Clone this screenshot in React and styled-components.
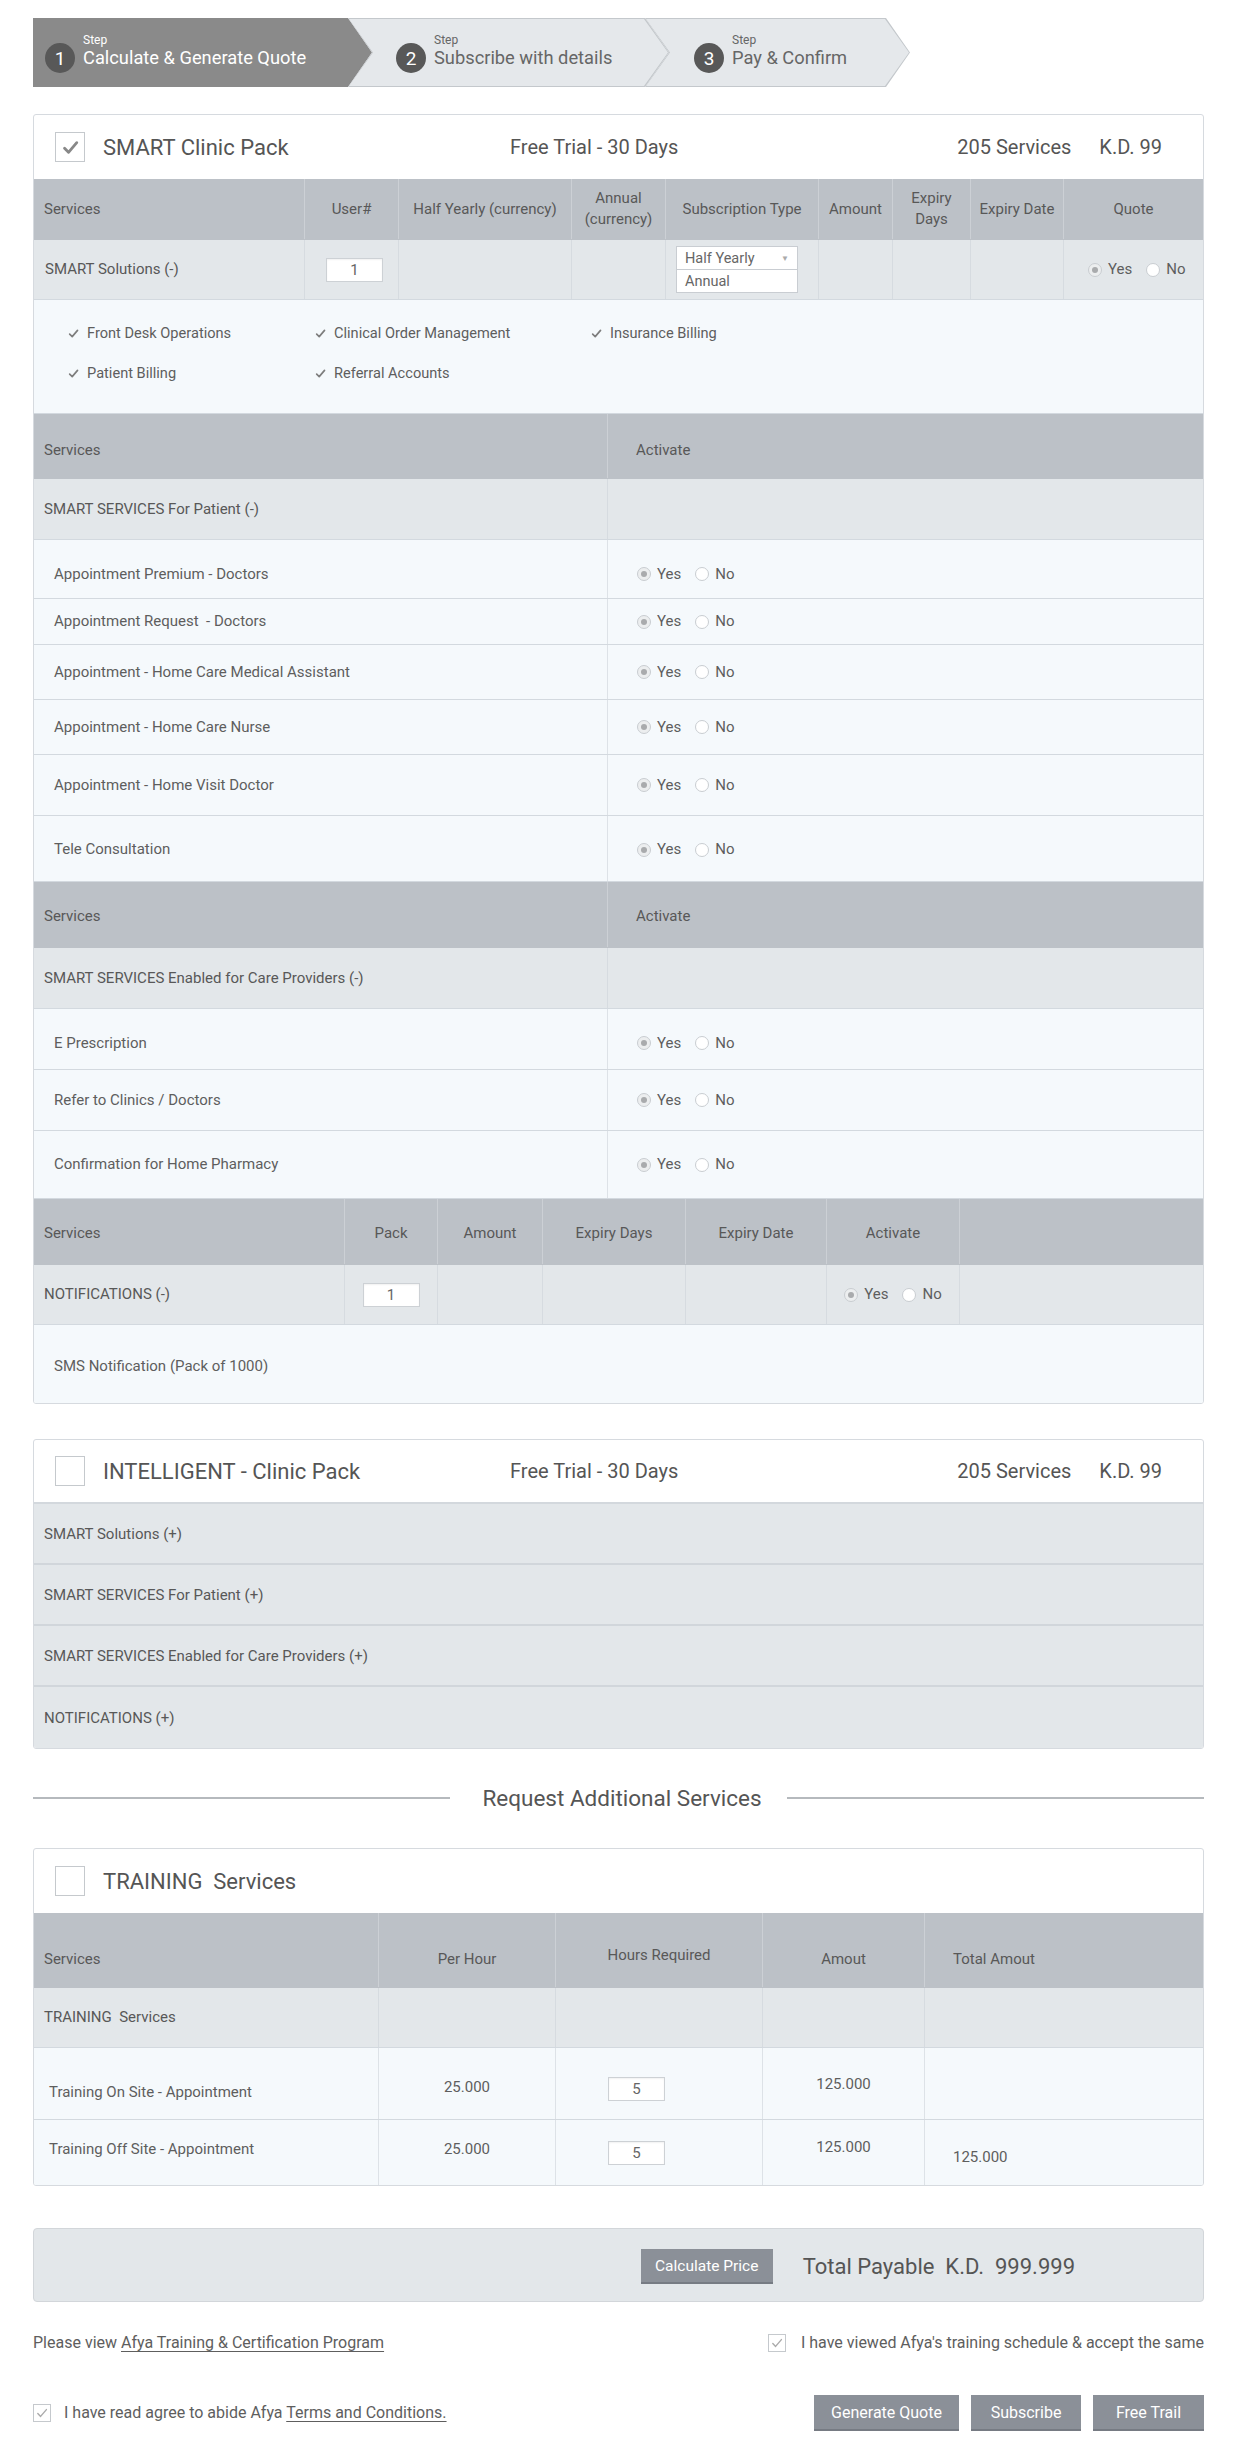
import React from 'react'
import styled, { createGlobalStyle } from 'styled-components'

const GlobalStyle = createGlobalStyle`
  * { box-sizing: border-box; }
  body {
    margin: 0;
    background: #fff;
    font-family: Roboto, "Liberation Sans", Arial, sans-serif;
    color: #5e5e5e;
  }
`

const Page = styled.div`
  width: 1171px;
  margin-left: 33px;
  padding: 18px 0 10px;
`

/* ---------- steps ---------- */

const firstArrow = 'polygon(0 0, calc(100% - 24px) 0, 100% 50%, calc(100% - 24px) 100%, 0 100%)'
const restArrow = 'polygon(0 0, calc(100% - 24px) 0, 100% 50%, calc(100% - 24px) 100%, 0 100%, 24px 50%)'

const StepBar = styled.div`
  display: flex;
  height: 69px;
`

const StepEdge = styled.div`
  flex: 0 0 ${p => p.$w}px;
  margin-left: ${p => (p.$first ? 0 : -24)}px;
  padding: 1px;
  background: ${p => (p.$active ? '#8a8a8a' : '#c4c8cc')};
  clip-path: ${p => (p.$first ? firstArrow : restArrow)};
`

const StepFace = styled.div`
  height: 100%;
  display: flex;
  align-items: flex-end;
  padding: 0 0 13px ${p => p.$pad}px;
  background: ${p => (p.$active ? '#8a8a8a' : '#e5e8eb')};
  clip-path: ${p => (p.$first ? firstArrow : restArrow)};
  color: ${p => (p.$active ? '#fff' : '#666')};
`

const StepNum = styled.div`
  width: 30px;
  height: 30px;
  border-radius: 50%;
  background: #585858;
  color: #fff;
  font-size: 19px;
  display: flex;
  align-items: center;
  justify-content: center;
  flex: none;
`

const StepText = styled.div`
  margin: 0 0 4px 8px;
  display: flex;
  flex-direction: column;
`

const StepLabel = styled.span`
  font-size: 12px;
  line-height: 14px;
`

const StepTitle = styled.span`
  font-size: 18.3px;
  line-height: 22px;
  white-space: nowrap;
`

/* ---------- cards ---------- */

const Card = styled.section`
  margin-top: ${p => p.$mt}px;
  border: 1px solid #d6dadf;
  border-radius: 3px;
  background: #fff;
  overflow: hidden;
`

const CardHead = styled.div`
  height: ${p => p.$h || 64}px;
  display: flex;
  align-items: center;
  padding: 0 41px 0 21px;
  border-bottom: ${p => (p.$line ? '2px solid #d3d8dd' : 'none')};
  color: #555;
`

const HeadLeft = styled.div`
  width: 455px;
  display: flex;
  align-items: center;
`

const BigCheck = styled.div`
  width: 30px;
  height: 30px;
  border: 1px solid #c5c9cd;
  background: #fff;
  display: flex;
  align-items: center;
  justify-content: center;
  flex: none;
`

const SmallCheck = styled(BigCheck)`
  width: 18px;
  height: 18px;
`

const PackTitle = styled.h2`
  margin: 0 0 0 18px;
  font-weight: 400;
  font-size: 22px;
  white-space: pre;
`

const HeadInfo = styled.span`
  font-size: 20px;
  margin-left: ${p => p.$ml || 0}px;
`

const Spacer = styled.div`
  flex: 1;
`

/* ---------- table rows ---------- */

const tones = {
  head: { bg: '#bcc1c7', line: '#ccd0d5', color: '#585858' },
  group: { bg: '#e3e7ea', line: '#d6dbe0', color: '#585858' },
  body: { bg: '#f5f9fc', line: '#dde2e7', color: '#5e5e5e' },
}

const Row = styled.div`
  display: grid;
  grid-template-columns: ${p => p.$cols};
  height: ${p => p.$h}px;
  background: ${p => tones[p.$tone].bg};
  color: ${p => tones[p.$tone].color};
  border-bottom: ${p => (p.$last ? 'none' : `1px solid ${p.$tone === 'head' ? tones.head.bg : '#d3d9df'}`)};
  font-size: 15px;

  & > * {
    border-right: 1px solid ${p => tones[p.$tone].line};
    padding-top: ${p => p.$pt || 0}px;
  }
  & > *:last-child {
    border-right: none;
  }
`

const Cell = styled.div`
  display: flex;
  align-items: center;
  justify-content: ${p => (p.$center ? 'center' : 'flex-start')};
  text-align: ${p => (p.$center ? 'center' : 'left')};
  padding-left: ${p => p.$pl ?? (p.$center ? 0 : 10)}px;
  line-height: 21px;
`

const ShiftedText = styled.span`
  position: relative;
  top: ${p => p.$dy}px;
`

const FeatureBlock = styled.div`
  height: 114px;
  background: #f5f9fc;
  border-bottom: 1px solid #d3d9df;
  padding: 23px 0 0 34px;
  display: grid;
  grid-template-columns: 247px 276px auto;
  grid-auto-rows: 20px;
  row-gap: 20px;
  font-size: 14.6px;
  color: #5e5e5e;
`

const Feature = styled.div`
  display: flex;
  align-items: center;
  gap: 4px;
`

const CollapsedRow = styled.div`
  height: 61px;
  display: flex;
  align-items: center;
  padding-left: 10px;
  background: #e3e7ea;
  border-bottom: ${p => (p.$last ? 'none' : '2px solid #d1d6db')};
  font-size: 15px;
  color: #585858;
`

/* ---------- controls ---------- */

const NumInput = styled.input`
  width: 57px;
  height: 24px;
  border: 1px solid #cdd1d5;
  background: #fff;
  text-align: center;
  font: 15px Roboto, "Liberation Sans", sans-serif;
  color: #666;
  padding: 0;
  box-shadow: inset 0 1px 2px rgba(0, 0, 0, 0.06);
`

const SelectStack = styled.div`
  width: 122px;
  margin-left: 10px;
  display: flex;
  flex-direction: column;
`

const SelectBox = styled.div`
  height: ${p => p.$h}px;
  border: 1px solid #c9cdd2;
  border-top-width: ${p => (p.$top ? 1 : 0)}px;
  background: #fff;
  font-size: 14.5px;
  color: #666;
  padding: 0 8px;
  display: flex;
  align-items: center;
  justify-content: space-between;
`

const Caret = styled.span`
  font-size: 8px;
  color: #aaa;
`

const RadioGroup = styled.div`
  display: flex;
  align-items: center;
  margin-left: ${p => p.$ml || 0}px;
  color: #5e5e5e;
  font-size: 15px;
`

const RadioDot = styled.span`
  position: relative;
  width: 14px;
  height: 14px;
  border-radius: 50%;
  border: 1px solid #c9cdd1;
  background: ${p => (p.$on ? '#eceeef' : '#fff')};
  margin-right: 6px;
  flex: none;

  &::after {
    content: '';
    display: ${p => (p.$on ? 'block' : 'none')};
    position: absolute;
    inset: 3px;
    border-radius: 50%;
    background: #a9abad;
  }
`

const RadioLabel = styled.span`
  margin-right: 14px;
  &:last-child {
    margin-right: 0;
  }
`

/* ---------- divider, totals, footer ---------- */

const Divider = styled.div`
  display: flex;
  align-items: center;
  height: 28px;
  margin: 35px 0 36px;
`

const DividerLine = styled.div`
  flex: 1;
  height: 2px;
  background: #b5b9bd;
`

const DividerText = styled.span`
  font-size: 22.5px;
  color: #555;
  margin: 0 25px 0 32px;
`

const TotalBar = styled.div`
  margin-top: 42px;
  height: 74px;
  background: #e3e7ea;
  border: 1px solid #d2d6da;
  border-radius: 4px;
  display: flex;
  align-items: center;
  justify-content: flex-end;
  padding: 3px 128px 0 0;
`

const GrayButton = styled.button`
  height: ${p => p.$h || 36}px;
  width: ${p => p.$w}px;
  border: 0;
  border-bottom: 2px solid #767b83;
  background: #8b9098;
  color: #fff;
  font: ${p => p.$fs || 16}px Roboto, "Liberation Sans", sans-serif;
  cursor: pointer;
  padding: 0;
`

const TotalText = styled.div`
  margin-left: 30px;
  font-size: 22px;
  color: #555;
  white-space: pre;
`

const InfoRow = styled.div`
  margin-top: 31px;
  display: flex;
  align-items: center;
  justify-content: space-between;
  font-size: 16px;
  color: #5e5e5e;
  line-height: 20px;
`

const ActionRow = styled(InfoRow)`
  margin-top: 42px;
`

const TextLink = styled.a`
  color: #5e5e5e;
  text-decoration: underline;
  text-underline-offset: 3px;
`

const Agree = styled.label`
  display: flex;
  align-items: center;
  gap: ${p => p.$gap || 13}px;
`

const ButtonGroup = styled.div`
  display: flex;
  gap: 12px;
`

/* ---------- icons ---------- */

const Tick = ({ size = 12, color = '#7d7d7d', w = 1.8 }) => (
  <svg width={size} height={size} viewBox="0 0 12 12">
    <path d="M1.8 6.6 L4.6 9.4 L10.4 2.6" fill="none" stroke={color} strokeWidth={w} strokeLinecap="round" strokeLinejoin="round" />
  </svg>
)

const Radios = ({ ml }) => (
  <RadioGroup $ml={ml}>
    <RadioDot $on />
    <RadioLabel>Yes</RadioLabel>
    <RadioDot />
    <RadioLabel>No</RadioLabel>
  </RadioGroup>
)

/* ---------- data ---------- */

const smartCols = '271px 94px 173px 94px 153px 74px 78px 93px 1fr'
const activateCols = '574px 1fr'
const notifyCols = '311px 93px 105px 143px 141px 133px 1fr'
const trainCols = '345px 177px 207px 162px 1fr'

const features = [
  'Front Desk Operations',
  'Clinical Order Management',
  'Insurance Billing',
  'Patient Billing',
  'Referral Accounts',
]

const patientServices = [
  { name: 'Appointment Premium - Doctors', h: 59, pt: 10 },
  { name: 'Appointment Request  - Doctors', h: 46 },
  { name: 'Appointment - Home Care Medical Assistant', h: 55 },
  { name: 'Appointment - Home Care Nurse', h: 55 },
  { name: 'Appointment - Home Visit Doctor', h: 61 },
  { name: 'Tele Consultation', h: 66, pt: 2 },
]

const providerServices = [
  { name: 'E Prescription', h: 61, pt: 8 },
  { name: 'Refer to Clinics / Doctors', h: 61 },
  { name: 'Confirmation for Home Pharmacy', h: 68 },
]

const collapsed = [
  'SMART Solutions (+)',
  'SMART SERVICES For Patient (+)',
  'SMART SERVICES Enabled for Care Providers (+)',
  'NOTIFICATIONS (+)',
]

const steps = [
  { n: 1, title: 'Calculate & Generate Quote', w: 339, pad: 11, active: true },
  { n: 2, title: 'Subscribe with details', w: 321, pad: 47 },
  { n: 3, title: 'Pay & Confirm', w: 265, pad: 48 },
]

/* ---------- sections ---------- */

function PackHeader({ title, checked, line, info = true }) {
  return (
    <CardHead $line={line}>
      <HeadLeft>
        <BigCheck>{checked && <Tick size={17} color="#888" w={2} />}</BigCheck>
        <PackTitle>{title}</PackTitle>
      </HeadLeft>
      {info && (
        <>
          <HeadInfo>Free Trial - 30 Days</HeadInfo>
          <Spacer />
          <HeadInfo>205 Services</HeadInfo>
          <HeadInfo $ml={28}>K.D. 99</HeadInfo>
        </>
      )}
    </CardHead>
  )
}

function ActivateTable({ group, items, headH, headPt }) {
  return (
    <>
      <Row $tone="head" $cols={activateCols} $h={headH} $pt={headPt}>
        <Cell>Services</Cell>
        <Cell $pl={28}>Activate</Cell>
      </Row>
      <Row $tone="group" $cols={activateCols} $h={61}>
        <Cell>{group}</Cell>
        <Cell />
      </Row>
      {items.map(s => (
        <Row key={s.name} $tone="body" $cols={activateCols} $h={s.h} $pt={s.pt}>
          <Cell $pl={20} style={{ whiteSpace: 'pre' }}>{s.name}</Cell>
          <Cell $pl={29}>
            <Radios />
          </Cell>
        </Row>
      ))}
    </>
  )
}

function SmartPack() {
  return (
    <Card $mt={27}>
      <PackHeader title="SMART Clinic Pack" checked />
      <Row $tone="head" $cols={smartCols} $h={61}>
        <Cell>Services</Cell>
        <Cell $center>User#</Cell>
        <Cell $center>Half Yearly (currency)</Cell>
        <Cell $center>Annual<br />(currency)</Cell>
        <Cell $center>Subscription Type</Cell>
        <Cell $center>Amount</Cell>
        <Cell $center>Expiry<br />Days</Cell>
        <Cell $center>Expiry Date</Cell>
        <Cell $center>Quote</Cell>
      </Row>
      <Row $tone="group" $cols={smartCols} $h={60}>
        <Cell $pl={11}>SMART Solutions (-)</Cell>
        <Cell $center $pl={6}>
          <NumInput defaultValue="1" />
        </Cell>
        <Cell />
        <Cell />
        <Cell $pl={0}>
          <SelectStack>
            <SelectBox $h={24} $top>
              Half Yearly <Caret>▼</Caret>
            </SelectBox>
            <SelectBox $h={23}>Annual</SelectBox>
          </SelectStack>
        </Cell>
        <Cell />
        <Cell />
        <Cell />
        <Cell $pl={0}>
          <Radios ml={24} />
        </Cell>
      </Row>
      <FeatureBlock>
        {features.map(f => (
          <Feature key={f}>
            <Tick size={11} />
            <span style={{ marginLeft: 4 }}>{f}</span>
          </Feature>
        ))}
      </FeatureBlock>

      <ActivateTable group="SMART SERVICES For Patient (-)" items={patientServices} headH={65} headPt={8} />
      <ActivateTable group="SMART SERVICES Enabled for Care Providers (-)" items={providerServices} headH={66} headPt={4} />

      <Row $tone="head" $cols={notifyCols} $h={66} $pt={4}>
        <Cell>Services</Cell>
        <Cell $center>Pack</Cell>
        <Cell $center>Amount</Cell>
        <Cell $center>Expiry Days</Cell>
        <Cell $center>Expiry Date</Cell>
        <Cell $center>Activate</Cell>
        <Cell />
      </Row>
      <Row $tone="group" $cols={notifyCols} $h={60}>
        <Cell>NOTIFICATIONS (-)</Cell>
        <Cell $center>
          <NumInput defaultValue="1" />
        </Cell>
        <Cell />
        <Cell />
        <Cell />
        <Cell $center>
          <Radios />
        </Cell>
        <Cell />
      </Row>
      <Row $tone="body" $cols="1fr" $h={78} $last $pt={4}>
        <Cell $pl={20}>SMS Notification (Pack of 1000)</Cell>
      </Row>
    </Card>
  )
}

function IntelligentPack() {
  return (
    <Card $mt={35}>
      <PackHeader title="INTELLIGENT - Clinic Pack" line />
      {collapsed.map((c, i) => (
        <CollapsedRow key={c} $last={i === collapsed.length - 1}>
          {c}
        </CollapsedRow>
      ))}
    </Card>
  )
}

function TrainingPack() {
  return (
    <Card>
      <PackHeader title={'TRAINING  Services'} info={false} />
      <Row $tone="head" $cols={trainCols} $h={75} $pt={18}>
        <Cell>Services</Cell>
        <Cell $center>Per Hour</Cell>
        <Cell $center>
          <ShiftedText $dy={-4}>Hours Required</ShiftedText>
        </Cell>
        <Cell $center>Amout</Cell>
        <Cell $pl={28}>Total Amout</Cell>
      </Row>
      <Row $tone="group" $cols={trainCols} $h={60}>
        <Cell>TRAINING&nbsp;&nbsp;Services</Cell>
        <Cell />
        <Cell />
        <Cell />
        <Cell />
      </Row>
      <Row $tone="body" $cols={trainCols} $h={72} $pt={10}>
        <Cell $pl={15}>
          <ShiftedText $dy={4}>Training On Site - Appointment</ShiftedText>
        </Cell>
        <Cell $center>
          <ShiftedText $dy={-1}>25.000</ShiftedText>
        </Cell>
        <Cell $pl={52}>
          <NumInput defaultValue="5" />
        </Cell>
        <Cell $center>
          <ShiftedText $dy={-4}>125.000</ShiftedText>
        </Cell>
        <Cell />
      </Row>
      <Row $tone="body" $cols={trainCols} $h={65} $last>
        <Cell $pl={15}>
          <ShiftedText $dy={-3}>Training Off Site - Appointment</ShiftedText>
        </Cell>
        <Cell $center>
          <ShiftedText $dy={-3}>25.000</ShiftedText>
        </Cell>
        <Cell $pl={52}>
          <NumInput defaultValue="5" />
        </Cell>
        <Cell $center>
          <ShiftedText $dy={-5}>125.000</ShiftedText>
        </Cell>
        <Cell $pl={28}>
          <ShiftedText $dy={5}>125.000</ShiftedText>
        </Cell>
      </Row>
    </Card>
  )
}

export default function App() {
  return (
    <>
      <GlobalStyle />
      <Page>
        <StepBar>
          {steps.map((s, i) => (
            <StepEdge key={s.n} $w={s.w} $first={i === 0} $active={s.active}>
              <StepFace $first={i === 0} $active={s.active} $pad={s.pad}>
                <StepNum>{s.n}</StepNum>
                <StepText>
                  <StepLabel>Step</StepLabel>
                  <StepTitle>{s.title}</StepTitle>
                </StepText>
              </StepFace>
            </StepEdge>
          ))}
        </StepBar>

        <SmartPack />
        <IntelligentPack />

        <Divider>
          <DividerLine />
          <DividerText>Request Additional Services</DividerText>
          <DividerLine />
        </Divider>

        <TrainingPack />

        <TotalBar>
          <GrayButton $w={132} $h={35} $fs={15.5}>Calculate Price</GrayButton>
          <TotalText>{'Total Payable  K.D.  999.999'}</TotalText>
        </TotalBar>

        <InfoRow>
          <span>
            Please view <TextLink href="#">Afya Training &amp; Certification Program</TextLink>
          </span>
          <Agree $gap={15}>
            <SmallCheck>
              <Tick size={12} color="#aaa" w={1.4} />
            </SmallCheck>
            I have viewed Afya's training schedule &amp; accept the same
          </Agree>
        </InfoRow>

        <ActionRow>
          <Agree>
            <SmallCheck>
              <Tick size={12} color="#aaa" w={1.4} />
            </SmallCheck>
            <span>
              I have read agree to abide Afya <TextLink href="#">Terms and Conditions.</TextLink>
            </span>
          </Agree>
          <ButtonGroup>
            <GrayButton $w={145}>Generate Quote</GrayButton>
            <GrayButton $w={110}>Subscribe</GrayButton>
            <GrayButton $w={111}>Free Trail</GrayButton>
          </ButtonGroup>
        </ActionRow>
      </Page>
    </>
  )
}
